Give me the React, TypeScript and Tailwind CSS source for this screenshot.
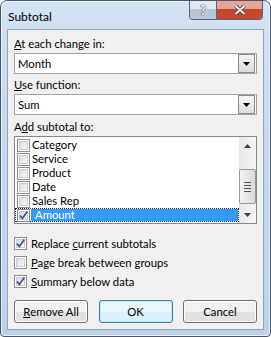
import type { ReactNode } from "react";

const Check = ({ checked }: { checked?: boolean }) => {
  return (
    <span className="relative flex h-[13px] w-[13px] shrink-0 items-center justify-center border border-[#8e8f8f] bg-white">
      <span className="h-[9px] w-[9px] border border-[#c9ccd1] bg-gradient-to-br from-[#dadde2] to-[#f8f8f8]" />
      {checked && (
        <svg className="absolute -left-px -top-px" width="13" height="13" viewBox="0 0 13 13">
          <path d="M3 6.6 L5.4 9.4 L10.3 2.4" fill="none" stroke="#3b5590" strokeWidth="1.8" />
        </svg>
      )}
    </span>
  );
};

const Combo = ({ value }: { value: string }) => {
  return (
    <div className="mt-[2px] flex h-[21px] items-center border border-[#a3a3a3] bg-white pl-[3px] pr-px">
      <span className="flex-1 text-black">{value}</span>
      <span className="flex h-[19px] w-[17px] items-center justify-center border border-[#8a8a8a] bg-gradient-to-b from-[#f4f4f4] to-[#dcdcdc]">
        <svg width="7" height="4" viewBox="0 0 7 4">
          <path d="M0 0 H7 L3.5 4 Z" fill="#000" />
        </svg>
      </span>
    </div>
  );
};

const Btn = ({ children, def }: { children: ReactNode; def?: boolean }) => {
  return (
    <button
      className={
        def
          ? "flex h-[23px] w-[74px] items-center justify-center rounded-[3px] border border-[#3c7fb1] bg-gradient-to-b from-[#eaf6fd] from-50% to-[#d9f0fc] to-50% shadow-[inset_0_0_0_1px_#c4e5f6]"
          : "flex h-[23px] w-[74px] items-center justify-center rounded-[3px] border border-[#707070] bg-gradient-to-b from-[#f2f2f2] from-50% to-[#e1e1e1] to-50% shadow-[inset_0_0_0_1px_#fcfcfc]"
      }
    >
      {children}
    </button>
  );
};

const items = ["Category", "Service", "Product", "Date", "Sales Rep"];

export default function App() {
  return (
    <div className="h-[337px] w-[271px] bg-white font-['Lato','Segoe_UI',sans-serif] text-[11.3px] leading-[15px] text-black">
      <div className="flex h-[337px] w-[271px] flex-col rounded-t-[7px] rounded-b-[4px] border border-[#4b5766] bg-gradient-to-b from-[#d3e3f4] via-[#c3d7ee] to-[#bcd2eb] shadow-[inset_0_0_0_1px_#e6f0fa]">
        <div className="flex h-[28px] items-start justify-between">
          <span className="pl-[7px] pt-[8px] text-[12px]">Subtotal</span>
          <div className="mr-[7px] flex h-[19px] overflow-hidden rounded-b-[4px] border border-t-0 border-[#56657a]">
            <span className="flex w-[27px] items-center justify-center border-r border-[#56657a] bg-gradient-to-b from-[#dfe8f3] from-45% to-[#b7c7da] to-45% text-[13px] font-bold text-white [text-shadow:0_0_1px_#222,0_0_1px_#222]">
              ?
            </span>
            <span className="flex w-[45px] items-center justify-center bg-gradient-to-b from-[#e3a698] from-45% to-[#c8452f] to-45%">
              <svg width="12" height="10" viewBox="0 0 12 10">
                <path d="M1.5 1 L10.5 9 M10.5 1 L1.5 9" stroke="#3a3a3a" strokeWidth="3.6" />
                <path d="M1.5 1 L10.5 9 M10.5 1 L1.5 9" stroke="#fff" strokeWidth="2" />
              </svg>
            </span>
          </div>
        </div>
        <div className="mx-[6px] flex h-[301px] flex-col border border-[#8ea2ba] bg-[#f0f0f0] px-[6px] pt-[6px]">
          <span>
            <u>A</u>t each change in:
          </span>
          <Combo value="Month" />
          <span className="mt-[3px]">
            <u>U</u>se function:
          </span>
          <Combo value="Sum" />
          <span className="mt-[4px]">
            A<u>d</u>d subtotal to:
          </span>
          <div className="mt-[2px] flex h-[88px] border border-[#828790] bg-white leading-[14px]">
            <div className="flex-1 pt-px">
              {items.map((it) => (
                <div key={it} className="flex h-[14px] items-center pl-[2px]">
                  <Check />
                  <span className="pl-[2px]">{it}</span>
                </div>
              ))}
              <div className="flex h-[14px] items-center border border-dotted border-[#222] pl-px">
                <Check checked />
                <span className="ml-px flex h-[12px] flex-1 items-center bg-[#3399ff] pl-[4px] text-white">Amount</span>
              </div>
            </div>
            <div className="flex w-[17px] flex-col bg-gradient-to-r from-[#e6e6e6] to-[#f6f6f6]">
              <span className="flex h-[17px] items-center justify-center">
                <svg width="7" height="4" viewBox="0 0 7 4">
                  <path d="M0 4 H7 L3.5 0 Z" fill="#404040" />
                </svg>
              </span>
              <span className="mt-[15px] flex h-[35px] flex-col items-center justify-center gap-[2px] rounded-[2px] border border-[#969696] bg-gradient-to-r from-[#f3f3f3] to-[#d8d8d8]">
                <span className="h-px w-[7px] bg-[#555]" />
                <span className="h-px w-[7px] bg-[#555]" />
                <span className="h-px w-[7px] bg-[#555]" />
                <span className="h-px w-[7px] bg-[#555]" />
              </span>
              <span className="mt-auto flex h-[17px] items-center justify-center">
                <svg width="7" height="4" viewBox="0 0 7 4">
                  <path d="M0 0 H7 L3.5 4 Z" fill="#404040" />
                </svg>
              </span>
            </div>
          </div>
          <div className="mt-[10px] flex h-[19px] items-center gap-[4px]">
            <Check checked />
            <span>
              Replace <u>c</u>urrent subtotals
            </span>
          </div>
          <div className="flex h-[19px] items-center gap-[4px]">
            <Check />
            <span>
              <u>P</u>age break between groups
            </span>
          </div>
          <div className="flex h-[19px] items-center gap-[4px]">
            <Check checked />
            <span>
              <u>S</u>ummary below data
            </span>
          </div>
          <div className="mt-[9px] flex justify-between">
            <Btn>
              <u>R</u>emove All
            </Btn>
            <Btn def>OK</Btn>
            <Btn>Cancel</Btn>
          </div>
        </div>
      </div>
    </div>
  );
}
